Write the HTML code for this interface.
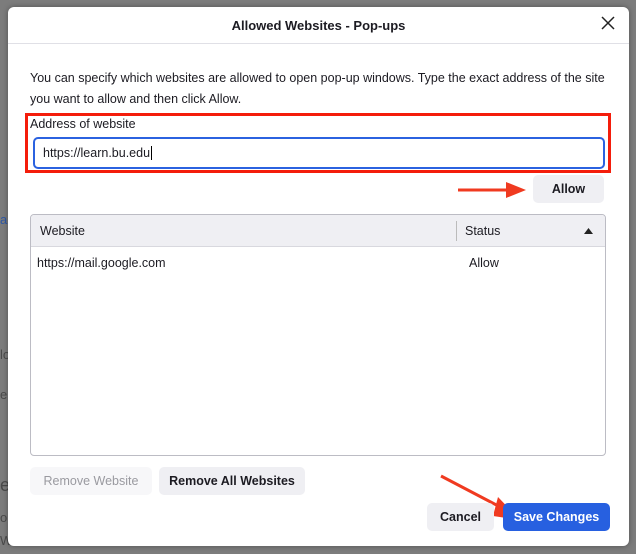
<!DOCTYPE html>
<html><head><meta charset="utf-8"><style>
*{box-sizing:border-box;margin:0;padding:0}
body{width:636px;height:554px;background:#7c7c7c;font-family:"Liberation Sans",sans-serif;position:relative;overflow:hidden;font-size:12.5px;color:#1c1b22}
.bgt{position:absolute;left:0;color:#222;font-size:13px;opacity:.55}
.dlg{position:absolute;left:8px;top:7px;width:621px;height:539px;background:#fff;border-radius:6px;box-shadow:0 0 6px rgba(0,0,0,.35)}
.title{position:absolute;left:0;right:0;top:0;height:37px;border-bottom:1px solid #e0e0e6;text-align:center;line-height:38px;font-weight:bold;font-size:13px}
.x{position:absolute;right:14px;top:9px}
.p{position:absolute;left:22px;top:61px;line-height:21px;font-size:12.5px;width:590px}
.red{position:absolute;left:17px;top:106px;width:586px;height:60px;border:3px solid #f41d0b}
.lab{position:absolute;left:22px;top:110px;font-size:12.5px}
.inp{position:absolute;left:25px;top:130px;width:572px;height:32px;border:2px solid #2b62e0;border-radius:5px;padding-left:8px;line-height:28px;font-size:12.5px}
.btn{position:absolute;background:#efeff3;border-radius:5px;text-align:center;font-weight:bold;font-size:12.5px}
.tbl{position:absolute;left:22px;top:207px;width:576px;height:242px;border:1px solid #bcbcc4;border-radius:4px;overflow:hidden}
.th{height:32px;background:#efeff3;border-bottom:1px solid #d8d8de;position:relative;line-height:32px}
</style></head><body>
<div class="bgt" style="top:212px;color:#1a4fb0;opacity:.8">ar</div>
<div class="bgt" style="top:347px">lo</div>
<div class="bgt" style="top:387px">eb</div>
<div class="bgt" style="top:475px;font-size:18px">e</div>
<div class="bgt" style="top:510px">ou</div>
<div class="bgt" style="top:533px">W</div>
<div class="dlg">
 <div class="title">Allowed Websites - Pop-ups</div>
 <svg class="x" width="14" height="14" viewBox="0 0 14 14"><path d="M1 1L13 13M13 1L1 13" stroke="#222" stroke-width="1.5"/></svg>
 <div class="p">You can specify which websites are allowed to open pop-up windows. Type the exact address of the site you want to allow and then click Allow.</div>
 <div class="red"></div>
 <div class="lab">Address of website</div>
 <div class="inp">https://learn.bu.edu<span style="border-left:1px solid #000;margin-left:1px"></span></div>
 <svg style="position:absolute;left:448px;top:172px" width="72" height="22"><path d="M2 11H52" stroke="#f03a20" stroke-width="3"/><path d="M50 3L70 11L50 19Z" fill="#f03a20"/></svg>
 <div class="btn" style="left:525px;top:168px;width:71px;height:28px;line-height:28px">Allow</div>
 <div class="tbl">
  <div class="th"><span style="position:absolute;left:9px">Website</span><span style="position:absolute;left:425px;top:6px;height:20px;border-left:1px solid #bbb"></span><span style="position:absolute;left:434px">Status</span><svg style="position:absolute;left:553px;top:13px" width="9" height="6"><path d="M0 6L4.5 0L9 6Z" fill="#222"/></svg></div>
  <div style="position:absolute;left:6px;top:41px">https://mail.google.com</div>
  <div style="position:absolute;left:438px;top:41px">Allow</div>
 </div>
 <div class="btn" style="left:22px;top:460px;width:122px;height:28px;line-height:28px;background:#f7f7f9;color:#9a9aa0;font-weight:normal">Remove Website</div>
 <div class="btn" style="left:151px;top:460px;width:146px;height:28px;line-height:28px">Remove All Websites</div>
 <svg style="position:absolute;left:430px;top:466px" width="84" height="50"><path d="M3 3L66 36" stroke="#f03a20" stroke-width="3"/><path d="M60 24L82 47L55 43Z" fill="#f03a20"/></svg>
 <div class="btn" style="left:419px;top:496px;width:67px;height:28px;line-height:28px">Cancel</div>
 <div class="btn" style="left:495px;top:496px;width:107px;height:28px;line-height:28px;background:#2760e0;color:#fff">Save Changes</div>
</div>
</body></html>
